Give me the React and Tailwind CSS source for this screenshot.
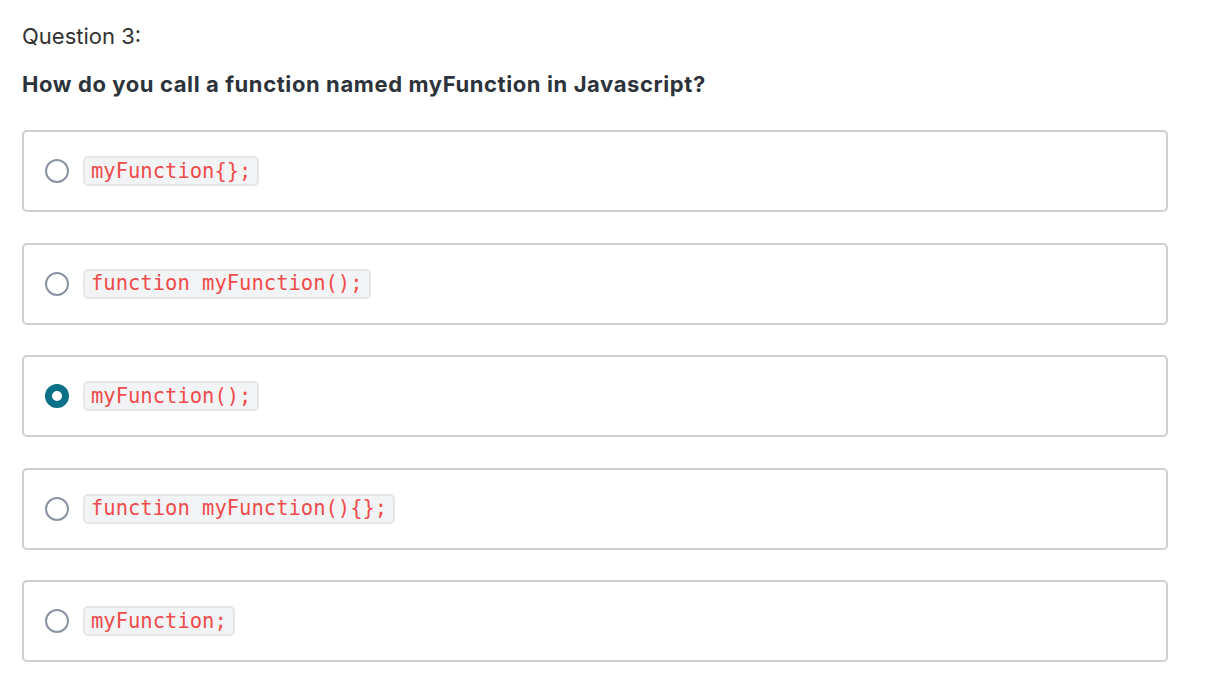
export default function App() {
  const options = [
    { code: "myFunction{};", checked: false },
    { code: "function myFunction();", checked: false },
    { code: "myFunction();", checked: true },
    { code: "function myFunction(){};", checked: false },
    { code: "myFunction;", checked: false },
  ];
  return (
    <div className="bg-white min-h-[700px] pl-[22px] pr-[38px] pt-[21px]" style={{ fontFamily: "Inter, 'Liberation Sans', sans-serif" }}>
      <div className="text-[22px] leading-[30px] text-[#333333]">Question 3:</div>
      <div className="mt-[18px] text-[22px] leading-[30px] font-bold tracking-[0.6px] text-[#2d333b]">
        How do you call a function named myFunction in Javascript?
      </div>
      <div className="mt-[31px] flex flex-col gap-[30.5px]">
        {options.map((o, i) => (
          <label key={i} className="flex items-center h-[82px] border-2 border-[#cfcfcf] rounded-[5px] pl-[21px]">
            {o.checked ? (
              <span className="w-[24px] h-[24px] rounded-full border-[7px] border-[#0b7189] bg-white shrink-0" />
            ) : (
              <span className="w-[24px] h-[24px] rounded-full border-2 border-[#8b93a3] bg-white shrink-0" />
            )}
            <code
              className="ml-[14px] px-[6px] h-[30px] flex items-center rounded-[5px] border-2 border-[#e4e6e9] bg-[#f2f3f5] text-[#ee4b4b] text-[20.5px]"
              style={{ fontFamily: "'DejaVu Sans Mono', monospace", whiteSpace: "pre" }}
            >
              {o.code}
            </code>
          </label>
        ))}
      </div>
    </div>
  );
}
